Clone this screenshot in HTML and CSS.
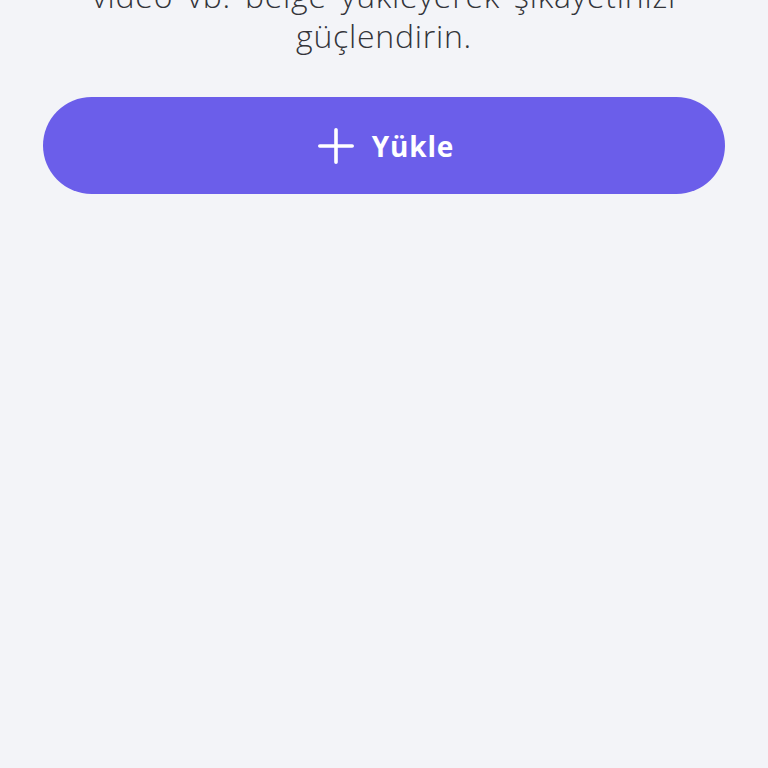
FILE: index.html
```html
<!DOCTYPE html>
<html lang="tr">
<head>
<meta charset="utf-8">
<link rel="stylesheet" href="styles.css">
</head>
<body>
<main class="page">
  <p class="desc">Fotoğraf,<br>video vb. belge yükleyerek şikayetinizi<br>güçlendirin.</p>
  <button class="upload" type="button">
    <svg class="plus" viewBox="0 0 36 36" width="36" height="36" aria-hidden="true">
      <path d="M18 1.8V34.2M1.8 18H34.2" stroke="#fff" stroke-width="3.6" stroke-linecap="round" fill="none"/>
    </svg>
    <span>Yükle</span>
  </button>
</main>
</body>
</html>
```
FILE: styles.css
```css
html, body {
  margin: 0;
  padding: 0;
  background: #f3f4f8;
  height: 100%;
}
.page {
  display: flex;
  flex-direction: column;
  padding: 0 43px;
  font-family: "Open Sans", Lato, sans-serif;
}
.desc {
  margin: -64px 0 0;
  font-size: 32px;
  line-height: 40px;
  font-weight: 300;
  letter-spacing: 0.75px;
  word-spacing: 5px;
  color: #33343a;
  text-align: center;
  white-space: nowrap;
}
.upload {
  margin-top: 41px;
  height: 97px;
  border: none;
  border-radius: 49px;
  background: #6b5eea;
  color: #fff;
  display: flex;
  align-items: center;
  justify-content: center;
  gap: 18px;
  font-family: "Open Sans", Lato, sans-serif;
  font-size: 28px;
  font-weight: 700;
  letter-spacing: 0.8px;
  padding: 0 0 0 4px;
}
.plus {
  display: block;
}
```
